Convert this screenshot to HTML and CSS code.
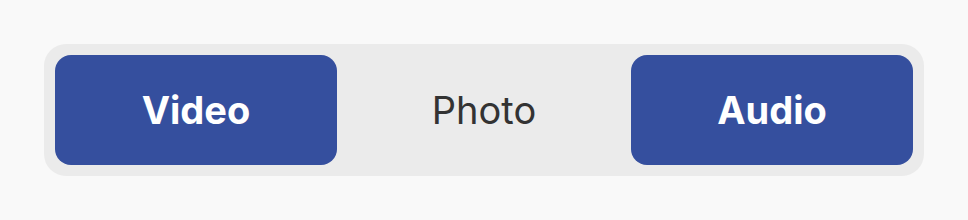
FILE: index.html
```html
<!DOCTYPE html>
<html>
<head>
    <meta charset="utf-8">
    <title>Media switch</title>
    <link rel="stylesheet" href="styles.css">
</head>
<body>
    <div class="switch">
        <button class="switch_item active">Video</button>
        <button class="switch_item">Photo</button>
        <button class="switch_item active">Audio</button>
    </div>
</body>
</html>
```

FILE: styles.css
```css
*{
    box-sizing: border-box;
    padding: 0;
    margin: 0;
}
body{
    background: #f9f9f9;
    font-family: Inter, "Noto Sans", sans-serif;
    padding: 44px;
}
.switch{
    display: flex;
    gap: 6px;
    padding: 11px;
    height: 132px;
    background: #ebebeb;
    border-radius: 22px;
}
.switch_item{
    flex: 1;
    border: none;
    border-radius: 16px;
    background: transparent;
    font-family: inherit;
    font-size: 38px;
    color: #333;
}
.switch_item.active{
    background: #354f9e;
    color: #fff;
    font-weight: 700;
}
```
